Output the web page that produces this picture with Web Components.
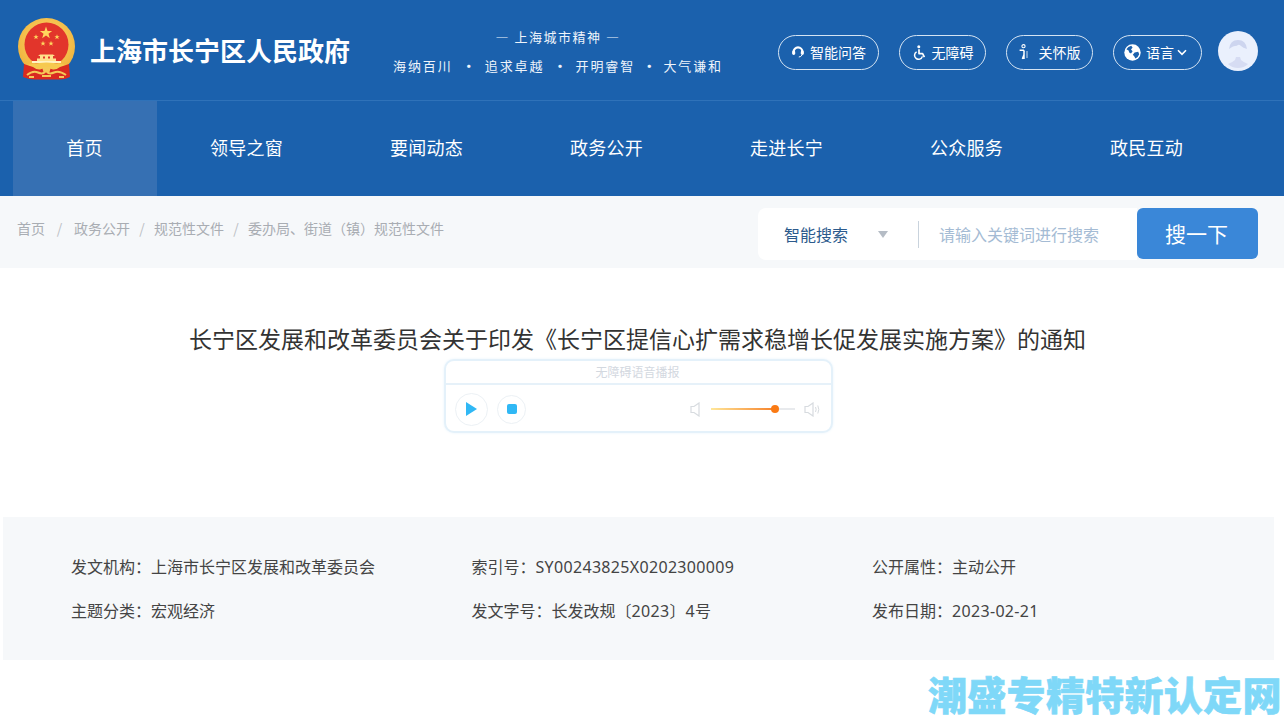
<!DOCTYPE html>
<html lang="zh-CN">
<head>
<meta charset="utf-8">
<title>长宁区发展和改革委员会</title>
<style>
  html, body { margin: 0; padding: 0; background: #fff; height: 719px; overflow: hidden; }
  body { font-family: "Noto Sans CJK SC", "Noto Sans", sans-serif; color: #333; position: relative; }
</style>
</head>
<body>
<gov-header></gov-header>
<gov-nav></gov-nav>
<crumb-bar></crumb-bar>
<article-title>长宁区发展和改革委员会关于印发《长宁区提信心扩需求稳增长促发展实施方案》的通知</article-title>
<voice-player></voice-player>
<doc-meta></doc-meta>
<site-mark>潮盛专精特新认定网</site-mark>

<script>
class HeaderPill extends HTMLElement {
  constructor() {
    super();
    this.attachShadow({ mode: 'open' });
    this.shadowRoot.innerHTML = `
      <style>
        :host { display: block; }
        .pill {
          box-sizing: border-box; height: 35px; padding-bottom: 1px; border: 1px solid #d5e4f3; border-radius: 18px;
          display: flex; align-items: center; justify-content: center; gap: 5px;
          color: #fff; font-size: 14px; line-height: 1; white-space: nowrap;
        }
        ::slotted(svg) { flex: none; display: block; }
      </style>
      <div class="pill"><slot></slot></div>
    `;
  }
}
customElements.define('header-pill', HeaderPill);

class GovHeader extends HTMLElement {
  constructor() {
    super();
    this.attachShadow({ mode: 'open' });
    this.shadowRoot.innerHTML = `
      <style>
        :host { display: block; background: #1b61ad; height: 100px; }
        .bar { display: flex; align-items: center; height: 100px; box-sizing: border-box; padding: 0 26px 0 18px; }
        .emblem { flex: none; width: 58px; height: 62px; display: block; margin-top: -2px; }
        h1 { margin: -1px 0 0 14px; font-size: 26px; font-weight: 700; color: #fff; line-height: 1; white-space: nowrap; width: 261px; }
        .motto { margin-left: 42px; width: 330px; color: #eef4fb; font-size: 13px; letter-spacing: 1.9px; line-height: 1; margin-top: 1px; }
        .motto .top { text-align: center; margin-bottom: 16px; letter-spacing: 1.5px; }
        .motto .row { display: flex; white-space: nowrap; }
        .motto b { text-align: center; font-weight: 700; letter-spacing: 0; }
        .tools { margin-left: auto; display: flex; align-items: center; gap: 20px; margin-top: 5px; }
        .avatar { width: 40px; height: 40px; margin-left: -4px; margin-top: -4px; display: block; }
      </style>
      <div class="bar">
        <svg class="emblem" viewBox="0 0 58 62">
          <defs>
            <radialGradient id="g" cx="50%" cy="40%" r="60%"><stop offset="0" stop-color="#ffd96b"/><stop offset="1" stop-color="#efb23c"/></radialGradient>
            <polygon id="s" points="0,-1 .24,-.31 .95,-.31 .38,.12 .59,.81 0,.4 -.59,.81 -.38,.12 -.95,-.31 -.24,-.31"/>
          </defs>
          <circle cx="28.500" cy="28.500" r="28.500" fill="url(#g)"/>
          <circle cx="28.500" cy="26.500" r="22" fill="#e2352b"/>
          <g fill="#ffd75e">
            <use href="#s" transform="translate(28 15) scale(6.500)"/>
            <use href="#s" transform="translate(18 19) scale(2.800)"/>
            <use href="#s" transform="translate(39 19) scale(2.800)"/>
            <use href="#s" transform="translate(25 25.500) scale(2.800)"/>
            <use href="#s" transform="translate(33 25.500) scale(2.800)"/>
          </g>
          <path fill="#ffe08a" d="M22 36.500h13l2 1.500h-2v2.500h3V43H19v-2.500h3V38h-2z"/>
          <path fill="#fff3c4" d="M14 43h29v2H14z"/>
          <path fill="#e2352b" d="M25 38.500h2v2h-2zM30 38.500h2v2h-2z"/>
          <path fill="#f6c94f" d="M8 47q20.500-5 41 0v5H8z"/>
          <path fill="#d92a20" d="M6 46l9 3q4 3 7 2.500 6-3 13 0 3 .5 7-2.500l9-3 1 13q-6 3-12 2.500H17Q11 61.500 5 59z"/>
          <path fill="none" stroke="#f5c957" stroke-width="2" d="M9 57q6-5 11-2.500t8-1.500q3 4 8 1.500T48 57"/>
          <path fill="#f5c957" d="M24 49h9l-1.500 5h-6zM24 57h9v2h-9zM11 58h5v2h-5zM41 58h5v2h-5z"/>
        </svg>
        <h1>上海市长宁区人民政府</h1>
        <div class="motto">
          <div class="top">— 上海城市精神 —</div>
          <div class="row"><span>海纳百川</span><b style="width:33px">•</b><span>追求卓越</span><b style="width:32px">•</b><span>开明睿智</span><b style="width:29px">•</b><span>大气谦和</span></div>
        </div>
        <div class="tools">
          <header-pill style="width:101px">
            <svg width="14" height="14" viewBox="0 0 14 14" fill="none"><path d="M2.600 8.500V6.800a4.400 4.400 0 0 1 8.800 0v1.700" stroke="#fff" stroke-width="2.200"/><rect x="1.200" y="5.600" width="3" height="4.400" rx="1.400" fill="#fff"/><rect x="9.800" y="5.600" width="3" height="4.400" rx="1.400" fill="#fff"/><path d="M11 10q-1 2-3.200 2" stroke="#fff" stroke-width="1"/></svg>
            智能问答
          </header-pill>
          <header-pill style="width:87px">
            <svg width="15" height="15" viewBox="0 0 15 15" fill="none"><circle cx="6.800" cy="1.800" r="1.500" fill="#fff"/><path d="M7 4.200v4.400h3.600l1.800 3.600" stroke="#fff" stroke-width="1.700" stroke-linejoin="round"/><path d="M4.600 6.800a4 4 0 1 0 5.800 4.600" stroke="#fff" stroke-width="1.500"/></svg>
            无障碍
          </header-pill>
          <header-pill style="width:87px">
            <svg width="12" height="16" viewBox="0 0 12 16" fill="none"><circle cx="5.500" cy="2.200" r="1.600" stroke="#fff" stroke-width="1.100"/><path d="M1.600 6.200h3.800l1 1.400M6 6.400V15M6 10.500 4.400 15" stroke="#fff" stroke-width="1.500"/><path d="M9 7v7" stroke="#fff" stroke-width=".8"/></svg>
            &nbsp;关怀版
          </header-pill>
          <header-pill style="width:89px">
            <svg width="17" height="17" viewBox="0 0 17 17"><circle cx="8.500" cy="8.500" r="8.200" fill="#fff"/><path fill="#1b61ad" d="M2.400 5.200Q4 2.400 7.200 1.800L8.600 3.400 7 5.400 8.600 7.200 7 9.600 5.200 8.600 4.600 6.400zM10.600 8.400l3.600-.6 1 2.400q-1 3-3.800 4.400l-1.200-2.400-1.400-1.400z"/></svg>
            语言
            <svg style="margin:0 4px 0 -2px" width="10" height="7" viewBox="0 0 10 7" fill="none"><path d="M1 1.200 5 5.400l4-4.200" stroke="#fff" stroke-width="1.600"/></svg>
          </header-pill>
          <svg class="avatar" viewBox="0 0 40 40">
            <circle cx="20" cy="20" r="20" fill="#eaf0fd"/>
            <path fill="#cdd5ef" d="M11 18q1-9 9-9t9 9q-4-1-6-3t-3-1-3 1-6 3z"/>
            <path fill="#d6dcf3" d="M18 26h4l1 3q2 2 7 4-4 4-10 4t-10-4q5-2 7-4z"/>
          </svg>
        </div>
      </div>
    `;
  }
}
customElements.define('gov-header', GovHeader);

class GovNav extends HTMLElement {
  constructor() {
    super();
    this.attachShadow({ mode: 'open' });
    const items = ['领导之窗', '要闻动态', '政务公开', '走进长宁', '公众服务', '政民互动'];
    this.shadowRoot.innerHTML = `
      <style>
        :host { display: block; background: #1b61ad; border-top: 1px solid #2f72b9; }
        nav { display: flex; height: 95px; padding-left: 13px; box-sizing: border-box; }
        a { display: flex; align-items: center; justify-content: center; box-sizing: border-box; width: 180px; padding: 0 1px 4px 0; color: #fff; font-size: 18px; letter-spacing: .25px; line-height: 1; }
        a.on { width: 144px; background: #3670b3; }
      </style>
      <nav><a class="on">首页</a>${items.map(t => `<a>${t}</a>`).join('')}</nav>
    `;
  }
}
customElements.define('gov-nav', GovNav);

class SearchBox extends HTMLElement {
  constructor() {
    super();
    this.attachShadow({ mode: 'open' });
    this.shadowRoot.innerHTML = `
      <style>
        :host { display: flex; width: 500px; height: 52px; }
        .field { flex: none; width: 379px; height: 52px; background: #fff; border-radius: 8px 0 0 8px; display: flex; align-items: center; box-sizing: border-box; padding-left: 26px; }
        .kind { width: 65px; font-size: 16px; color: #2c5a8c; white-space: nowrap; line-height: 1; }
        .arrow { width: 0; height: 0; margin-left: 29px; margin-top: 1px; border: 5.500px solid transparent; border-top: 7px solid #b5bcc5; border-bottom: 0; }
        .sep { width: 1px; height: 27px; background: #c9d3dd; margin-left: 30px; }
        .hint { margin-left: 20px; font-size: 16px; color: #a4bbd4; white-space: nowrap; line-height: 1; }
        button { flex: none; width: 121px; height: 51px; border: 0; padding: 0 2px 1px 0; border-radius: 6px; background: #3a87d8; color: #fff; font: inherit; font-size: 21px; }
      </style>
      <div class="field"><span class="kind">智能搜索</span><i class="arrow"></i><i class="sep"></i><span class="hint">请输入关键词进行搜索</span></div>
      <button>搜一下</button>
    `;
  }
}
customElements.define('search-box', SearchBox);

class CrumbBar extends HTMLElement {
  constructor() {
    super();
    this.attachShadow({ mode: 'open' });
    this.shadowRoot.innerHTML = `
      <style>
        :host { display: block; background: #f6f8fa; }
        .bar { height: 72px; box-sizing: border-box; padding: 12px 26px 8px 17px; display: flex; justify-content: space-between; }
        .path { display: flex; align-items: center; height: 40px; font-size: 14px; color: #a9adb3; white-space: nowrap; line-height: 1; }
        .path i { font-style: normal; color: #bcc0c5; width: 29px; text-align: center; }
        .path i.b { width: 24px; }
        .path i.c { width: 24px; }
      </style>
      <div class="bar">
        <div class="path"><span>首页</span><i>/</i><span>政务公开</span><i class="b">/</i><span>规范性文件</span><i class="c">/</i><span>委办局、街道（镇）规范性文件</span></div>
        <search-box></search-box>
      </div>
    `;
  }
}
customElements.define('crumb-bar', CrumbBar);

class ArticleTitle extends HTMLElement {
  constructor() {
    super();
    this.attachShadow({ mode: 'open' });
    this.shadowRoot.innerHTML = `
      <style>
        :host { display: block; text-align: center; font-size: 23px; line-height: 30px; color: #333; padding: 55px 0 0; margin-left: -9px; white-space: nowrap; }
      </style>
      <slot></slot>
    `;
  }
}
customElements.define('article-title', ArticleTitle);

class VoicePlayer extends HTMLElement {
  constructor() {
    super();
    this.attachShadow({ mode: 'open' });
    this.shadowRoot.innerHTML = `
      <style>
        :host { display: block; box-sizing: border-box; width: 389px; height: 74px; margin: 6px 0 0 444px; border: 2px solid #e4f1fa; border-radius: 10px; background: #fff; box-shadow: 0 0 3px #e9f4fc; }
        .head { height: 22px; border-bottom: 2px solid #e6f1f9; text-align: center; font-size: 12px; line-height: 22px; color: #d3d8df; padding-right: 2px; }
        .body { display: flex; align-items: center; height: 48px; padding: 0 11px 0 9px; }
        .btn { flex: none; box-sizing: border-box; border: 1px solid #ecf1f5; border-radius: 50%; display: flex; align-items: center; justify-content: center; }
        .play { width: 33px; height: 33px; }
        .stop { width: 29px; height: 29px; margin-left: 9px; }
        .stop i { display: block; width: 10px; height: 10px; border-radius: 2px; background: #30b8f5; }
        .vol { margin-left: auto; display: flex; align-items: center; }
        .track { position: relative; width: 84px; height: 2px; margin: 0 9px 0 11px; background: #e8eaed; }
        .fill { position: absolute; left: 0; top: 0; height: 2px; width: 64px; background: linear-gradient(90deg, #ffe79a, #f6822a); }
        .thumb { position: absolute; left: 60px; top: -3px; width: 8px; height: 8px; border-radius: 50%; background: #fa7a14; }
        svg { display: block; }
      </style>
      <div class="head">无障碍语音播报</div>
      <div class="body">
        <div class="btn play"><svg width="11" height="14" viewBox="0 0 11 14"><path d="M0 0 11 7 0 14z" fill="#30b8f5"/></svg></div>
        <div class="btn stop"><i></i></div>
        <div class="vol">
          <svg width="10" height="15" viewBox="0 0 10 15" fill="none"><path d="M9 1v13L4 10.500H1v-6h3z" stroke="#d7dbdf" stroke-width="1.200"/></svg>
          <div class="track"><div class="fill"></div><div class="thumb"></div></div>
          <svg width="16" height="15" viewBox="0 0 16 15" fill="none"><path d="M9 1v13L4 10.500H1v-6h3z" stroke="#d7dbdf" stroke-width="1.200"/><path d="M11.500 5q1.300 2.500 0 5M13.800 3.500q2 4 0 8" stroke="#d7dbdf"/></svg>
        </div>
      </div>
    `;
  }
}
customElements.define('voice-player', VoicePlayer);

class DocMeta extends HTMLElement {
  constructor() {
    super();
    this.attachShadow({ mode: 'open' });
    const rows = [
      '发文机构：上海市长宁区发展和改革委员会', '索引号：<span>SY00243825X0202300009</span>', '公开属性：主动公开',
      '主题分类：宏观经济', '发文字号：长发改规〔<span>2023</span>〕<span>4</span>号', '发布日期：<span>2023-02-21</span>'
    ];
    this.shadowRoot.innerHTML = `
      <style>
        :host { display: block; box-sizing: border-box; width: 1271px; height: 143px; margin: 84px 0 0 3px; background: #f6f8fa; }
        .grid { display: grid; grid-template-columns: 400.500px 400.500px 1fr; grid-auto-rows: 44px; padding: 27px 0 0 68px; }
        div div { font-size: 16px; line-height: 44px; color: #444; white-space: nowrap; }
        span { font-family: "Noto Sans", "Noto Sans CJK SC", sans-serif; letter-spacing: .32px; }
      </style>
      <div class="grid">${rows.map(t => `<div>${t}</div>`).join('')}</div>
    `;
  }
}
customElements.define('doc-meta', DocMeta);

class SiteMark extends HTMLElement {
  constructor() {
    super();
    this.attachShadow({ mode: 'open' });
    this.shadowRoot.innerHTML = `
      <style>
        :host { position: absolute; right: 0; top: 677px; width: 356px; height: 40px; font-family: "Liberation Sans", "Noto Sans CJK SC", sans-serif; font-size: 39px; font-weight: 900; line-height: 40px; color: #7fd8f8; white-space: nowrap; letter-spacing: .3px; -webkit-text-stroke: .6px #7fd8f8; }
      </style>
      <slot></slot>
    `;
  }
}
customElements.define('site-mark', SiteMark);
</script>
</body>
</html>
